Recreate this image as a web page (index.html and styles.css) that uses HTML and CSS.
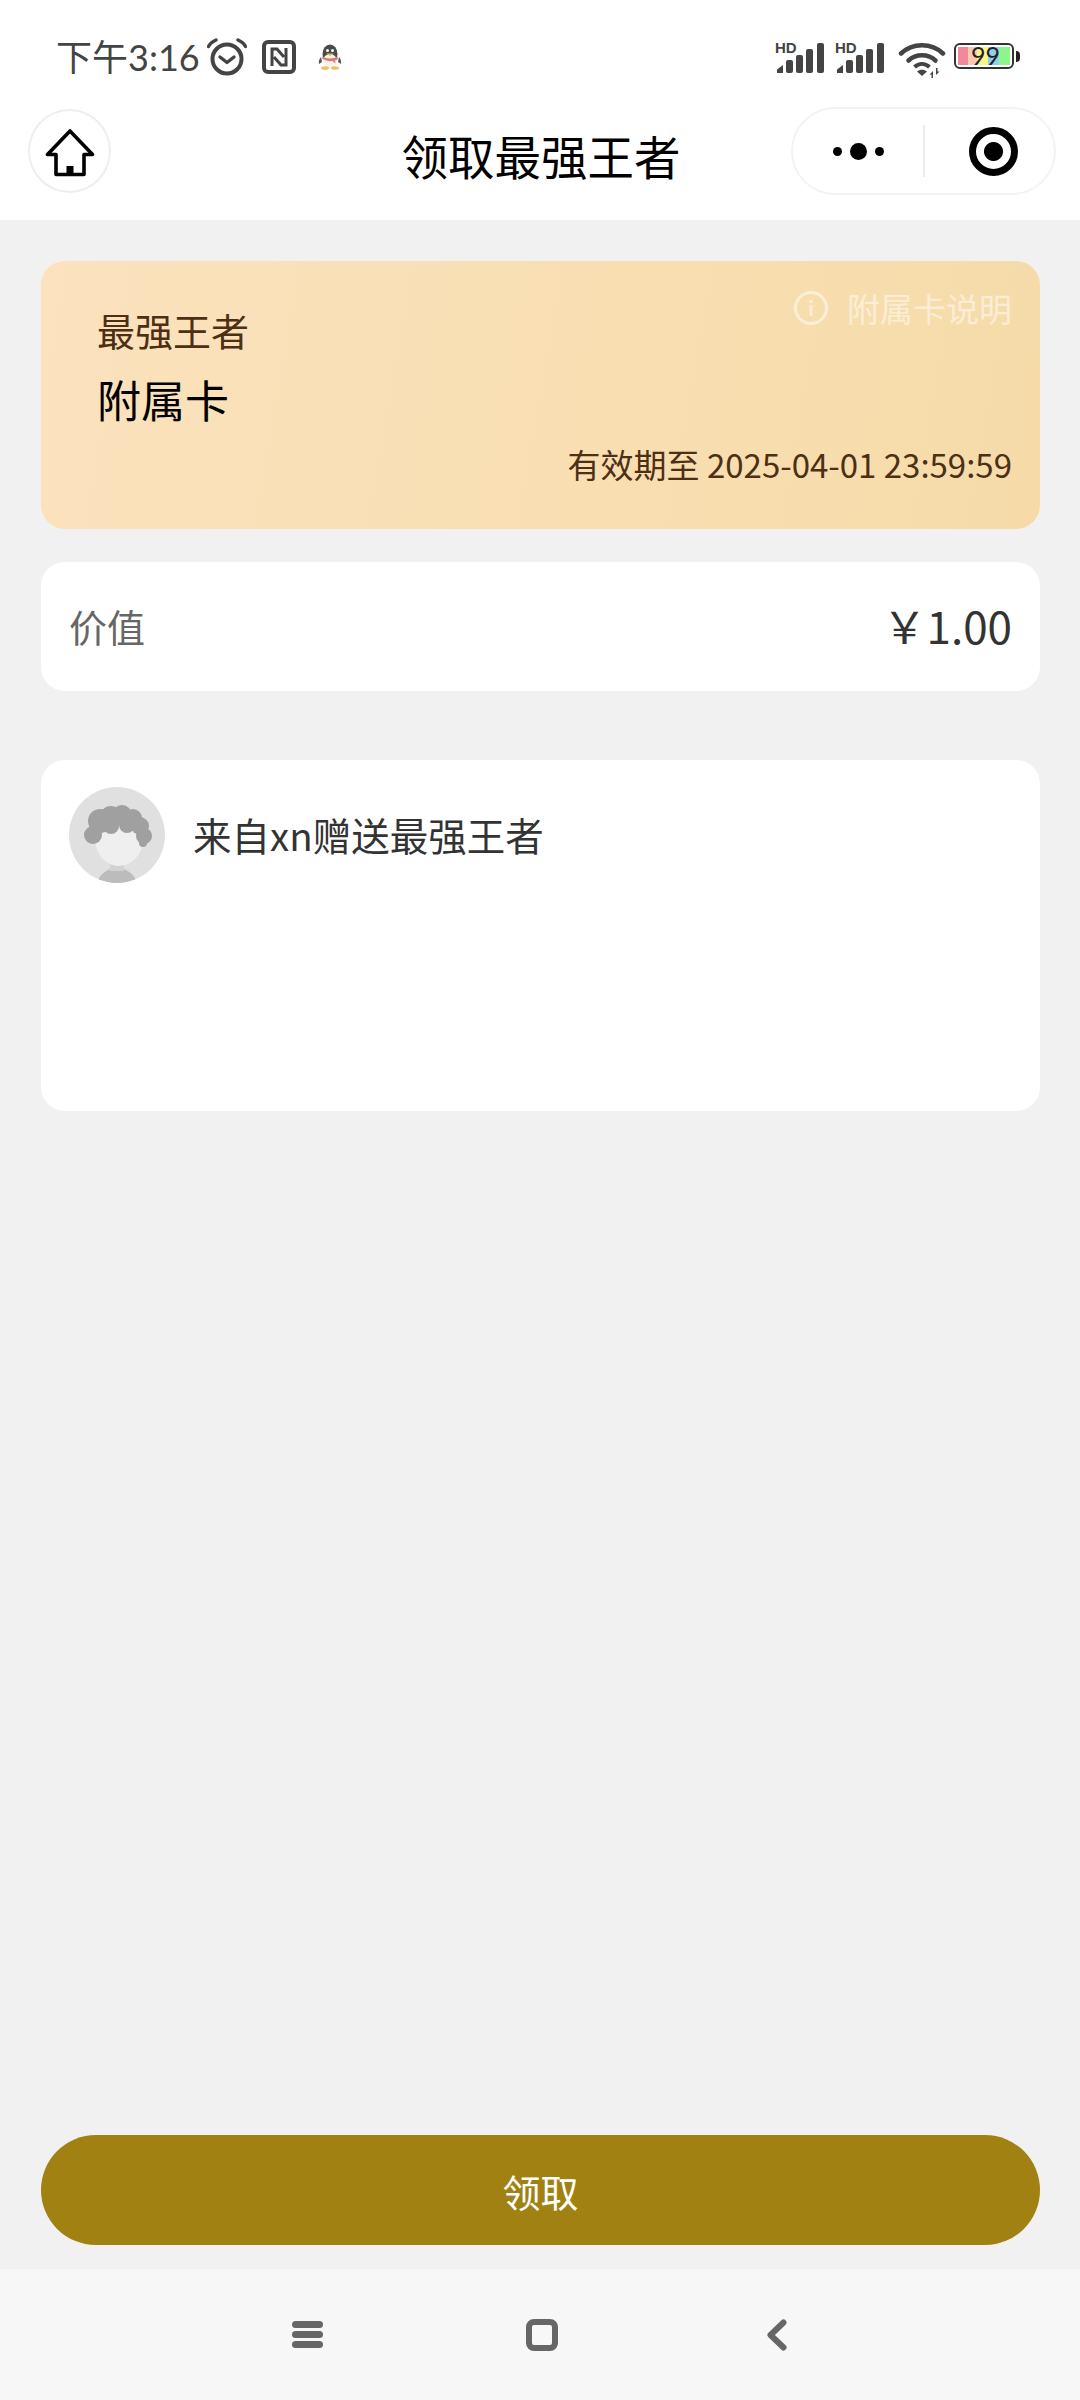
FILE: index.html
```html
<!DOCTYPE html>
<html lang="zh-CN">
<head>
  <meta charset="UTF-8">
  <title>领取最强王者</title>
  <link rel="stylesheet" href="styles.css">
</head>
<body>
  <header class="top">
    <div class="status-bar">
      <div class="status-left">
        <span class="time">下午3:16</span>
        <svg class="icon-alarm" width="40" height="38" viewBox="0 0 40 38">
          <circle cx="20" cy="21" r="14.500" fill="none" stroke="#444" stroke-width="4"/>
          <path d="M13 19l7 5.500 7-5.500" fill="none" stroke="#444" stroke-width="3.400" stroke-linecap="round" stroke-linejoin="round"/>
          <path d="M1.500 8.500C3 5.500 5.500 3.500 9 2M38.500 8.500C37 5.500 34.500 3.500 31 2" fill="none" stroke="#444" stroke-width="3.400" stroke-linecap="round"/>
        </svg>
        <svg class="icon-nfc" width="34" height="34" viewBox="0 0 34 34">
          <rect x="2" y="2" width="30" height="30" rx="4" fill="none" stroke="#444" stroke-width="4"/>
          <path d="M10 26V9h5l7 8M24 8v17h-5l-7-8" fill="none" stroke="#444" stroke-width="3"/>
        </svg>
        <svg class="icon-qq" width="24" height="26" viewBox="0 0 24 26">
          <ellipse cx="12" cy="10" rx="7.500" ry="9.500" fill="#4a4a4a"/>
          <ellipse cx="12" cy="17" rx="7" ry="7" fill="#f7f3ea"/>
          <path d="M3 13c-2 2-2.500 5-2 7l3-2zM21 13c2 2 2.500 5 2 7l-3-2z" fill="#555"/>
          <path d="M4.500 12.500c4 2.500 11 2.500 15 0l.5 2.500c-1 .8-2 1.200-3 1.500l.5 3-3-2.500c-2 .3-4 .2-6-.5-2-.5-3.500-1.500-4.500-2z" fill="#d9797a"/>
          <path d="M8.500 9.500h7l-3.500 2.500z" fill="#e9b84f"/>
          <circle cx="9.500" cy="6.500" r="1.500" fill="#fff"/>
          <circle cx="14.500" cy="6.500" r="1.500" fill="#fff"/>
          <ellipse cx="7" cy="24" rx="4" ry="1.800" fill="#ecc15f"/>
          <ellipse cx="17" cy="24" rx="4" ry="1.800" fill="#ecc15f"/>
        </svg>
      </div>
      <div class="status-right">
        <svg class="icon-signal" width="50" height="38" viewBox="0 -6 50 38">
          <text x="0" y="11" class="hd-text">HD</text>
          <path d="M2 31v-3.500l6-4.500v8z" fill="#444"/>
          <rect x="11" y="18" width="7" height="13" rx="2" fill="#444"/>
          <rect x="21" y="13" width="7" height="18" rx="2" fill="#444"/>
          <rect x="31" y="7" width="7" height="24" rx="2" fill="#444"/>
          <rect x="42" y="1" width="7" height="30" rx="2" fill="#444"/>
        </svg>
        <svg class="icon-signal" width="50" height="38" viewBox="0 -6 50 38">
          <text x="0" y="11" class="hd-text">HD</text>
          <path d="M2 31v-3.500l6-4.500v8z" fill="#444"/>
          <rect x="11" y="18" width="7" height="13" rx="2" fill="#444"/>
          <rect x="21" y="13" width="7" height="18" rx="2" fill="#444"/>
          <rect x="31" y="7" width="7" height="24" rx="2" fill="#444"/>
          <rect x="42" y="1" width="7" height="30" rx="2" fill="#444"/>
        </svg>
        <svg class="icon-wifi" width="48" height="36" viewBox="0 0 48 36">
          <path d="M3 11.500C14.500 .5 33.500 .5 45 11.500" fill="none" stroke="#444" stroke-width="4.500" stroke-linecap="round"/>
          <path d="M10.500 18.500C18 11.500 30 11.500 37.500 18.500" fill="none" stroke="#444" stroke-width="4.500" stroke-linecap="round"/>
          <path d="M16.500 25C21 21 27 21 31.500 25" fill="none" stroke="#444" stroke-width="4"/>
          <path d="M19 29.500c3-2.500 7-2.500 10 0l-5 4.500z" fill="#444"/>
          <path d="M33 35v-7l-3.500 3.500h2V35zM36 25v7l3.500-3.500h-2V25z" fill="#444" transform="translate(2 1)"/>
        </svg>
        <div class="battery">
          <div class="battery-body">
            <span class="cell cell-red"></span>
            <span class="cell cell-peach"></span>
            <span class="cell cell-yellow"></span>
            <span class="cell cell-blue"></span>
            <span class="cell cell-green"></span>
            <span class="battery-num">99</span>
          </div>
          <span class="battery-tip"></span>
        </div>
      </div>
    </div>

    <nav class="navbar">
      <div class="nav-left">
        <div class="home-btn">
          <svg class="home-icon" width="50" height="50" viewBox="0 0 50 50">
            <path d="M25 3L2.500 26.500H11V46.500H39V26.500H47.500Z" fill="none" stroke="#000" stroke-width="3.600" stroke-linejoin="round"/>
            <rect x="21.500" y="38" width="7" height="8.500" fill="#000"/>
          </svg>
        </div>
      </div>
      <h1 class="nav-title">领取最强王者</h1>
      <div class="nav-right">
        <div class="capsule">
          <div class="capsule-more">
            <span class="dot"></span>
            <span class="dot dot-big"></span>
            <span class="dot"></span>
          </div>
          <span class="capsule-line"></span>
          <div class="capsule-close">
            <span class="target"></span>
          </div>
        </div>
      </div>
    </nav>
  </header>

  <main class="content">
    <section class="vip-card">
      <div class="vip-top">
        <div class="vip-names">
          <div class="vip-name">最强王者</div>
          <div class="vip-type">附属卡</div>
        </div>
        <div class="vip-info">
          <svg width="36" height="36" viewBox="0 0 36 36">
            <circle cx="18" cy="18" r="15.500" fill="none" stroke="currentColor" stroke-width="3"/>
            <rect x="16.500" y="15" width="3" height="11" fill="currentColor"/>
            <rect x="16.500" y="10" width="3" height="3" fill="currentColor"/>
          </svg>
          <span>附属卡说明</span>
        </div>
      </div>
      <div class="vip-expire">有效期至 2025-04-01 23:59:59</div>
    </section>

    <section class="value-card">
      <span class="value-label">价值</span>
      <span class="value-num">￥1.00</span>
    </section>

    <section class="gift-card">
      <svg class="avatar" width="96" height="96" viewBox="0 0 96 96">
        <defs>
          <clipPath id="avatar-clip"><circle cx="48" cy="48" r="48"/></clipPath>
        </defs>
        <g clip-path="url(#avatar-clip)">
          <rect width="96" height="96" fill="#e0e0e0"/>
          <path d="M28 96c3-11 13-15 20-15s17 4 20 15z" fill="#bcbcbc"/>
          <rect x="41" y="72" width="14" height="12" fill="#d2d2d2"/>
          <ellipse cx="50" cy="52" rx="24" ry="27" fill="#efefef"/>
          <g fill="#a0a0a0">
            <circle cx="31" cy="34" r="12"/>
            <circle cx="42" cy="30" r="11"/>
            <circle cx="42" cy="39" r="8"/>
            <circle cx="53" cy="28" r="10"/>
            <circle cx="58" cy="38" r="8"/>
            <circle cx="64" cy="31" r="9"/>
            <circle cx="71" cy="39" r="9"/>
            <circle cx="75" cy="49" r="8"/>
            <circle cx="24" cy="48" r="9"/>
            <circle cx="74" cy="56" r="4"/>
          </g>
        </g>
      </svg>
      <span class="gift-text">来自xn赠送最强王者</span>
    </section>
  </main>

  <div class="action">
    <button class="receive-btn">领取</button>
  </div>

  <footer class="sys-nav">
    <div class="sys-menu">
      <span></span>
      <span></span>
      <span></span>
    </div>
    <span class="sys-home"></span>
    <svg class="sys-back" width="20" height="32" viewBox="0 0 20 32">
      <path d="M16.500 3.500L3.500 16l13 12.500" fill="none" stroke="#666" stroke-width="6" stroke-linecap="round" stroke-linejoin="round"/>
    </svg>
  </footer>
</body>
</html>
```

FILE: styles.css
```css
* {
  box-sizing: border-box;
}
body {
  margin: 0;
  width: 1080px;
  height: 2400px;
  background-color: #f1f1f1;
  font-family: "Noto Sans CJK SC", "Noto Sans", sans-serif;
  display: flex;
  flex-direction: column;
}
.top {
  height: 220px;
  background: white;
}
.status-bar {
  height: 107px;
  padding: 38px 60px 0 56px;
  display: flex;
  justify-content: space-between;
  align-items: flex-start;
}
.status-left {
  display: flex;
  align-items: center;
  height: 38px;
}
.time {
  font-family: Lato, "Noto Sans CJK SC", sans-serif;
  font-size: 36px;
  line-height: 38px;
  color: #444;
  width: 151px;
  white-space: nowrap;
}
.icon-alarm {
  margin-right: 15px;
}
.icon-qq {
  margin-left: 22px;
}
.status-right {
  display: flex;
  align-items: flex-start;
  margin-top: 4px;
}
.icon-signal {
  margin: -6px 10px 0 0;
}
.hd-text {
  font-family: "Liberation Sans", sans-serif;
  font-size: 15px;
  font-weight: bold;
  fill: #444;
}
.icon-wifi {
  margin: 0 8px 0 3px;
}
.battery {
  display: flex;
  align-items: center;
  height: 28px;
}
.battery-body {
  position: relative;
  display: flex;
  width: 60px;
  height: 26px;
  padding: 2px;
  border: 2px solid #333;
  border-radius: 6px;
}
.cell {
  flex: 1;
}
.cell-red { background: #f08a9a; flex: 0.9; }
.cell-peach { background: #fbc8b4; flex: 0.8; }
.cell-yellow { background: #fdf58a; }
.cell-blue { background: #8fd0f0; }
.cell-green { background: #8ef58a; }
.battery-num {
  position: absolute;
  top: -3px;
  left: 15px;
  font-family: Lato, sans-serif;
  font-size: 25px;
  line-height: 26px;
  color: #222;
}
.battery-tip {
  width: 4px;
  height: 11px;
  margin-left: 2px;
  background: #222;
  border-radius: 0 5px 5px 0;
}
.navbar {
  height: 113px;
  display: grid;
  grid-template-columns: 1fr auto 1fr;
  align-items: center;
  padding: 0 24px 26px 28px;
}
.home-btn {
  width: 83px;
  height: 84px;
  border: 2px solid #eeeeee;
  border-radius: 50%;
  display: flex;
  align-items: center;
  justify-content: center;
}
.home-icon {
  margin-top: 3px;
}
.nav-title {
  margin: 8px 2px 0 0;
  font-size: 46.500px;
  line-height: 60px;
  font-weight: normal;
  color: #000;
}
.nav-right {
  display: flex;
  justify-content: flex-end;
}
.capsule {
  width: 265px;
  height: 88px;
  border: 2px solid #f3f3f3;
  border-radius: 44px;
  display: flex;
  align-items: center;
}
.capsule-more {
  width: 130px;
  display: flex;
  justify-content: center;
  align-items: center;
  gap: 8px;
}
.dot {
  width: 9px;
  height: 9px;
  border-radius: 50%;
  background: #000;
}
.dot-big {
  width: 17px;
  height: 17px;
}
.capsule-line {
  width: 2px;
  height: 52px;
  background: #ececec;
}
.capsule-close {
  flex: 1;
  display: flex;
  justify-content: center;
  align-items: center;
  padding-left: 7px;
}
.target {
  width: 49px;
  height: 49px;
  border: 7px solid #000;
  border-radius: 50%;
  background: radial-gradient(circle, #000 0, #000 9px, white 10px);
}
.content {
  flex: 1;
  padding: 41px 40px 0 41px;
}
.vip-card {
  height: 268px;
  padding: 24px 28px 0 56px;
  border-radius: 24px;
  background: linear-gradient(100deg, #fce2bd, #f6dba9);
}
.vip-top {
  display: flex;
  justify-content: space-between;
  align-items: flex-start;
}
.vip-names {
  margin-top: 20px;
}
.vip-name {
  font-size: 38px;
  line-height: 50px;
  color: #4d2f14;
}
.vip-type {
  margin-top: 14px;
  font-size: 44px;
  line-height: 60px;
  color: #000;
}
.vip-info {
  display: flex;
  align-items: center;
  gap: 18px;
  height: 46px;
  font-size: 33px;
  color: rgba(255, 255, 255, 0.5);
}
.vip-expire {
  margin-top: 12px;
  text-align: right;
  font-size: 33px;
  line-height: 46px;
  color: #4d2f14;
  white-space: nowrap;
}
.value-card {
  height: 129px;
  margin-top: 33px;
  padding: 0 28px 3px;
  background: white;
  border-radius: 24px;
  display: flex;
  justify-content: space-between;
  align-items: center;
}
.value-label {
  font-size: 38px;
  color: #666;
}
.value-num {
  font-size: 44px;
  color: #333;
}
.gift-card {
  height: 351px;
  margin-top: 69px;
  padding: 27px 28px 0;
  background: white;
  border-radius: 24px;
  display: flex;
  align-items: flex-start;
  gap: 28px;
}
.avatar {
  flex-shrink: 0;
}
.gift-text {
  font-size: 38.500px;
  line-height: 94px;
  color: #333;
}
.action {
  padding: 0 40px 24px 41px;
}
.receive-btn {
  display: block;
  width: 100%;
  height: 110px;
  border: none;
  border-radius: 55px;
  background-color: #a08112;
  color: white;
  font-family: inherit;
  font-size: 38px;
}
.sys-nav {
  height: 131px;
  background: #f7f7f7;
  display: flex;
  justify-content: space-between;
  align-items: center;
  padding: 0 293px 0 292px;
}
.sys-menu {
  display: flex;
  flex-direction: column;
  gap: 3px;
  width: 31px;
}
.sys-menu span {
  height: 7px;
  border-radius: 4px;
  background: #666;
}
.sys-home {
  width: 32px;
  height: 32px;
  margin-right: 7px;
  border: 6px solid #666;
  border-radius: 8px;
}
```
